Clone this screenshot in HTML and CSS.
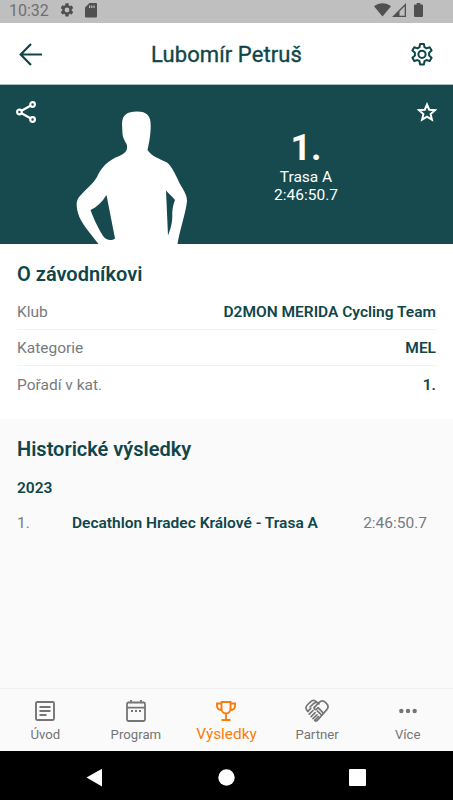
FILE: index.html
```html
<!DOCTYPE html>
<html lang="cs">
<head>
  <meta charset="UTF-8">
  <meta name="viewport" content="width=device-width, initial-scale=1">
  <title>Lubomír Petruš</title>
  <link rel="stylesheet" href="styles.css">
</head>
<body>
  <div class="statusbar">
    <span class="clock">10:32</span>
    <svg class="st-gear" width="16" height="16" viewBox="0 0 24 24"><path fill="currentColor" d="M19.140 12.940c.04-.3.06-.61.06-.94s-.02-.64-.07-.94l2.030-1.580a.5.5 0 0 0 .12-.61l-1.920-3.320a.49.49 0 0 0-.59-.22l-2.390.96a7 7 0 0 0-1.620-.94l-.36-2.540A.48.48 0 0 0 13.920 2h-3.840a.48.48 0 0 0-.47.41l-.36 2.540a7.400 7.400 0 0 0-1.620.94l-2.390-.96a.48.48 0 0 0-.59.22L2.740 8.870a.48.48 0 0 0 .12.610l2.030 1.580c-.05.3-.09.630-.09.940s.02.640.07.940l-2.030 1.580a.5.5 0 0 0-.12.610l1.920 3.320c.12.220.37.290.59.220l2.390-.96c.5.380 1.030.700 1.620.940l.36 2.540c.05.240.24.410.48.410h3.840c.24 0 .44-.17.470-.41l.36-2.540a7 7 0 0 0 1.620-.94l2.390.960c.22.080.47 0 .59-.22l1.920-3.320a.48.48 0 0 0-.12-.610zM12 15.600a3.600 3.600 0 1 1 0-7.200 3.600 3.600 0 0 1 0 7.200z"/></svg>
    <svg class="st-card" width="12" height="15" viewBox="0 0 12 15"><path fill="currentColor" fill-rule="evenodd" d="M4.500 0H11a1 1 0 0 1 1 1v12.500a1 1 0 0 1-1 1H1a1 1 0 0 1-1-1V4.500zM4 2.500V5h1.200V2.500zm2.200 0V5h1.200V2.500zm2.200 0V5h1.200V2.500z"/></svg>
    <span class="grow"></span>
    <svg width="17" height="14" viewBox="0 0 17 14"><path fill="currentColor" d="M8.500 13.500 0 3.300C5 -.9 12 -.9 17 3.300z"/></svg>
    <svg class="st-signal" width="14" height="14" viewBox="0 0 14 14"><path fill="currentColor" fill-rule="evenodd" d="M14 0v14H0zM12.700 3.300 7.500 8.500v4.200h5.200z"/></svg>
    <svg class="st-battery" width="9" height="14" viewBox="0 0 9 14"><path fill="currentColor" d="M2.700 0h3.600v1.400H8a1 1 0 0 1 1 1V13a1 1 0 0 1-1 1H1a1 1 0 0 1-1-1V2.400a1 1 0 0 1 1-1h1.700z"/></svg>
  </div>

  <header class="appbar">
    <svg width="24" height="24" viewBox="0 0 24 24" fill="none" stroke="currentColor" stroke-width="2.200"><path d="M23 11.500H2M12 1 1.700 11.500 12 22"/></svg>
    <h1>Lubomír Petruš</h1>
    <svg width="24" height="24" viewBox="0 0 24 24" fill="none" stroke="currentColor" stroke-width="2" stroke-linejoin="round"><path d="M10.100 1l3.800 0 .6 3.200 2 1.200 3.200-1.100 1.900 3.300-2.500 2.200v2.800l2.500 2.200-1.900 3.300-3.200-1.100-2 1.200-.6 3.300h-3.800l-.6-3.300-2-1.200-3.200 1.100-1.900-3.300 2.500-2.200v-2.800L2.400 7.600l1.900-3.300 3.200 1.100 2-1.200z"/><circle cx="12" cy="11.300" r="3.600"/></svg>
  </header>

  <section class="hero">
    <svg class="share" width="20" height="22" viewBox="0 0 20 22" fill="none" stroke="currentColor" stroke-width="2.200"><circle cx="3.400" cy="11" r="2.300"/><circle cx="16.600" cy="3.500" r="2.300"/><circle cx="16.600" cy="18.500" r="2.300"/><path d="M5.500 9.800 14.500 4.700M5.500 12.200l9 5.100"/></svg>
    <svg class="rider" width="112" height="133" viewBox="76 111 112 133"><path fill="#fff" fill-rule="evenodd" d="M122 124C122 115 127 111.500 137 111.500C147 111.500 151 116 150.700 126C150.500 137 149 143 147.500 150C151 156 160 159 167 162.500C172 166 177 178 180 184C184 191 187 195 187 201C186 212 180 229 177.500 244H98.500C91 234 80 222 78 213C76 205 76 200 80 196C86 189 93 184 97 177C101 168 106 163 113 159C120 155 128 154 127 146C127 143 123.500 141 122.500 134zM106.500 195C102 202 97 207 90.500 210C93 217 98 228 103 236C106 240 111 241.500 115 238.500zM166 190.500 168 235.500C171 228 172 223 172.300 217C172 210 173 205 175 200C172 196 168 193 166 190.500z"/></svg>
    <div class="score">
      <div class="rank">1.</div>
      <div>Trasa A</div>
      <div>2:46:50.7</div>
    </div>
    <svg class="star" width="20" height="20" viewBox="0 0 20 20" fill="none" stroke="currentColor" stroke-width="2"><path d="m10 2.500 2.200 5.200 5.800.5-4.400 3.800 1.300 5.600-4.900-3-4.900 3 1.300-5.600L2 8.200l5.800-.5z"/></svg>
  </section>

  <section class="about">
    <h2>O závodníkovi</h2>
    <div class="rows">
      <div class="row"><span>Klub</span><strong>D2MON MERIDA Cycling Team</strong></div>
      <div class="row"><span>Kategorie</span><strong>MEL</strong></div>
      <div class="row"><span>Pořadí v kat.</span><strong>1.</strong></div>
    </div>
  </section>

  <section class="history">
    <h2>Historické výsledky</h2>
    <h3>2023</h3>
    <div class="result">
      <span>1.</span>
      <strong>Decathlon Hradec Králové - Trasa A</strong>
      <span class="time">2:46:50.7</span>
    </div>
  </section>

  <nav class="tabs">
    <div class="tab">
      <svg width="24" height="24" viewBox="0 0 24 24" fill="none" stroke="currentColor" stroke-width="1.900"><rect x="3" y="3" width="18" height="18" rx="1.200"/><path d="M6.500 8h11M6.500 12h11M6.500 16h7"/></svg>
      <span>Úvod</span>
    </div>
    <div class="tab">
      <svg width="24" height="24" viewBox="0 0 24 24" fill="none" stroke="currentColor" stroke-width="1.800"><rect x="3" y="3.500" width="18" height="18.500" rx="1.500"/><path d="M3 8.700h18M7 1v3M17 1v3"/><path d="M7 12h2M11 12h2M15 12h2"/></svg>
      <span>Program</span>
    </div>
    <div class="tab active">
      <svg width="24" height="24" viewBox="0 0 24 24" fill="none" stroke="currentColor" stroke-width="1.900"><path d="M7.500 3h9v6.500a4.500 5 0 0 1-9 0zM7.500 4.500H3V7c0 2.500 2 4 4.700 4M16.500 4.500H21V7c0 2.500-2 4-4.700 4M12 14.500V21M7.500 21h9"/></svg>
      <span>Výsledky</span>
    </div>
    <div class="tab">
      <svg width="24" height="24" viewBox="0 0 24 24" fill="none" stroke="currentColor" stroke-width="1.700" stroke-linecap="round" stroke-linejoin="round"><path d="M2.800 12.300C.4 10 .4 8 2.300 6L5.500 2.800C7.500 1 9.500 1 11.500 2.800"/><path d="M9.500 8.200 14.300 3.400c2-2 4-2 6 0l1.300 1.300c2 2 2 4 0 6.200L12.500 21.300c-.8.900-1.900.8-2.700 0"/><path d="m5 8 3.500-3.300c2.200-2 4-1.500 5.500.2M9.500 8.200c-1.300 1.300.7 3 2 1.900l1.600-1.400 5.200 5.400"/><path d="m2.800 12.300 3-3M4.200 15.200l3.800-3.700M6.100 17.600l4-3.900M8 19.700l4-3.900M9.800 21.300l3.700-3.600M12.300 11.800l4 4"/></svg>
      <span>Partner</span>
    </div>
    <div class="tab">
      <svg width="24" height="24" viewBox="0 0 24 24" fill="currentColor"><circle cx="5.300" cy="12" r="2.200"/><circle cx="12" cy="12" r="2.200"/><circle cx="18.700" cy="12" r="2.200"/></svg>
      <span>Více</span>
    </div>
  </nav>

  <div class="sysnav">
    <svg width="17" height="20" viewBox="0 0 17 20"><path fill="#fff" d="M16 .8v17.600L.5 9.600z"/></svg>
    <svg width="17" height="17" viewBox="0 0 17 17"><circle cx="8.500" cy="8.500" r="8.200" fill="#fff"/></svg>
    <svg width="17" height="17" viewBox="0 0 17 17"><rect width="17" height="17" rx="1" fill="#fff"/></svg>
  </div>
</body>
</html>
```
FILE: styles.css
```css
* {
  box-sizing: border-box;
}
body {
  margin: 0;
  height: 800px;
  display: flex;
  flex-direction: column;
  overflow: hidden;
  font-family: Roboto, sans-serif;
  font-size: 15.5px;
  color: #10464a;
  background: #fff;
}
svg {
  display: block;
  flex: none;
}
h1, h2, h3 {
  margin: 0;
}
strong {
  font-weight: 600;
}

/* status bar */
.statusbar {
  height: 23px;
  flex: none;
  display: flex;
  align-items: center;
  padding: 0 30px 3px 9px;
  background: #bfbfbf;
  color: #505050;
}
.clock {
  width: 50px;
  padding-top: 1px;
  font-size: 16px;
  line-height: 20px;
  color: #707070;
}
.st-card {
  margin-left: 10px;
}
.grow {
  flex: 1;
}
.st-signal {
  margin-left: 1px;
}
.st-battery {
  margin-left: 8px;
}

.appbar {
  height: 62px;
  flex: none;
  display: flex;
  align-items: center;
  justify-content: space-between;
  padding: 2px 19px 0 19px;
  border-bottom: 1px solid #b0c0c2;
}
.appbar h1 {
  font-size: 22px;
  font-weight: 400;
  line-height: 26px;
  letter-spacing: 0.1px;
  -webkit-text-stroke: 0.35px currentColor;
}

/* rider card */
.hero {
  height: 159px;
  flex: none;
  display: flex;
  padding: 0 16px;
  color: #fff;
  background: #164a4e;
}
.share {
  margin-top: 16px;
}
.rider {
  margin: 26px 0 0 40px;
}
.score {
  flex: 1;
  padding: 43px 0 0 7px;
  text-align: center;
  font-size: 15.5px;
  line-height: 18px;
}
.rank {
  font-size: 36px;
  font-weight: 700;
  line-height: 40px;
}
.star {
  margin-top: 17px;
}

.about {
  height: 175px;
  flex: none;
  padding: 17px 17px 0;
}
h2 {
  font-size: 20px;
  font-weight: 600;
  line-height: 26px;
}
.rows {
  margin-top: 6px;
}
.row {
  display: flex;
  align-items: center;
  justify-content: space-between;
  height: 36.5px;
  padding-top: 2px;
  border-bottom: 1px solid #f2f2f2;
}
.row:last-child {
  border-bottom: 0;
}
.row span, .result span {
  color: #777b80;
}

.history {
  flex: 1;
  padding: 17px 17px 0;
  background: #fafafa;
}
.history h3 {
  margin-top: 16px;
  font-size: 15.5px;
  font-weight: 600;
  line-height: 20px;
}
.result {
  display: flex;
  margin-top: 15px;
  line-height: 20px;
}
.result span:first-child {
  width: 55px;
}
.result .time {
  margin-left: auto;
  margin-right: 9px;
}

/* bottom tabs */
.tabs {
  height: 63px;
  flex: none;
  display: flex;
  border-top: 1px solid #f0f0f0;
  background: #fafafa;
}
.tab {
  flex: 1;
  display: flex;
  flex-direction: column;
  align-items: center;
  padding-top: 10px;
  font-size: 13.2px;
  line-height: 24px;
  color: #757575;
}
.tab.active {
  font-size: 15.4px;
  line-height: 22px;
  color: #f97d0b;
}

.sysnav {
  height: 49px;
  flex: none;
  display: flex;
  align-items: center;
  justify-content: space-between;
  padding: 4px 87px 0 86px;
  background: #000;
}
```
